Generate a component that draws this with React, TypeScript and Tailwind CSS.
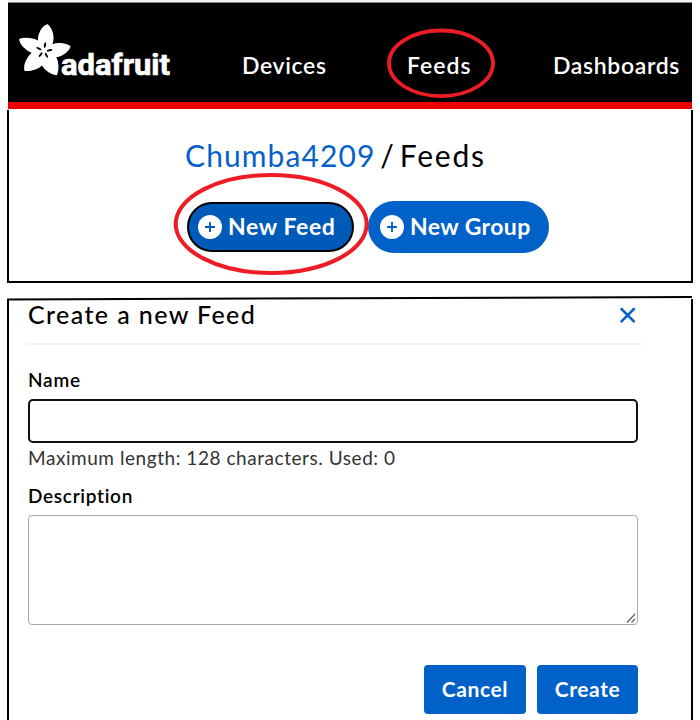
import React from "react";

function AdafruitLogo() {
  return (
    <svg className="block h-[60px] w-[154px]" viewBox="18 22 154 60" fill="none">
      <path
        d="M47.3 24.8C50.5 26.5 53 33 53 38C53 40.5 52.3 43 51.4 45C57 42.6 65.5 43.2 70 46.4C69 50.5 63 55.2 57.5 56.4L55.4 56.6C58.2 61.5 58.8 69 56.6 74.6C51.5 74.8 45 69.5 42 64.6C38.5 68.5 31 71.3 25 70.3C23.8 65 27 57 32.6 52.6C26 50 20.2 44 19.8 39.4C25 37.6 34 38.4 38.6 41.4C37.9 34.5 42 26.5 47.3 24.8Z"
        fill="#fff"
        stroke="#fff"
        strokeWidth="1.2"
        strokeLinejoin="round"
      />
      <g fill="#000">
        <ellipse cx="45" cy="45.1" rx="1.1" ry="2.9" transform="rotate(9 45 45.1)" />
        <ellipse cx="49.5" cy="50.3" rx="2.9" ry="1" transform="rotate(-12 49.5 50.3)" />
        <ellipse cx="46.4" cy="55.2" rx="1" ry="2.8" transform="rotate(-28 46.4 55.2)" />
        <ellipse cx="40.6" cy="54.7" rx="1" ry="2.8" transform="rotate(37 40.6 54.7)" />
        <ellipse cx="38.9" cy="48.6" rx="2.9" ry="1" transform="rotate(28 38.9 48.6)" />
      </g>
      <text x="61" y="75" fill="#fff" stroke="#fff" strokeWidth="0.7" fontFamily="Roboto, sans-serif" fontWeight="700" fontSize="30" textLength="109" lengthAdjust="spacingAndGlyphs">adafruit</text>
    </svg>
  );
}

function PlusBadge({ color }: { color: string }) {
  return (
    <svg className="block size-6 shrink-0" viewBox="0 0 24 24">
      <circle cx="12" cy="12" r="12" fill="#fff" />
      <path d="M12 7v10M7 12h10" stroke={color} strokeWidth="1.9" />
    </svg>
  );
}

export default function App() {
  return (
    <div className="relative h-[720px] w-[700px] overflow-hidden bg-white font-['Lato',sans-serif] whitespace-nowrap text-black">
      <div className="ml-2 h-[3px] w-[684px] border-b border-[#858585] bg-[#eef2f6]" />
      <header className="ml-2 flex h-[106px] w-[684px] border-b-[7px] border-[#e90000] bg-black pt-[19px] pl-[10px] text-[23px] font-semibold text-white">
        <AdafruitLogo />
        <nav className="flex pt-[30px] leading-[26px] tracking-[0.65px]">
          <a className="ml-[70px] w-[165px]">Devices</a>
          <a className="w-[145px] tracking-[1px]">Feeds</a>
          <a className="ml-px">Dashboards</a>
        </nav>
      </header>

      <section className="mt-px ml-[7px] h-[173px] w-[686px] border-2 border-t-0 border-black pt-[27px] pl-[176px]">
        <h1 className="text-[30px] leading-[36px] tracking-[1.1px] [word-spacing:-4px]">
          <a className="text-[#0561c8]">Chumba4209</a> / <span className="tracking-[1.8px]">Feeds</span>
        </h1>
        <div className="mt-[28px] flex items-center text-[23px] font-bold text-white">
          <button className="ml-[2px] flex h-[50px] w-[167px] items-center rounded-full border-2 border-black bg-[#005ab8] pl-[9px]">
            <PlusBadge color="#005ab8" />
            <span className="-mt-[2px] ml-[6px] tracking-[0.6px]">New Feed</span>
          </button>
          <button className="ml-[14px] flex h-[52px] w-[181px] items-center rounded-full bg-[#0061c9] pl-[12px]">
            <PlusBadge color="#0061c9" />
            <span className="-mt-[2px] ml-[6px] tracking-[0.4px]">New Group</span>
          </button>
        </div>
      </section>

      <section className="mt-4 ml-[7px] h-[421px] w-[686px] border-x-2 border-black pl-[19px]">
        <div className="flex h-[46px] w-[613px] items-start border-b-2 border-[#f1f1f1]">
          <h2 className="text-[25px] leading-[30px] font-medium tracking-[1.4px]">Create a new Feed</h2>
          <svg className="mt-[8px] mr-[5px] ml-auto block size-4" viewBox="0 0 16 16">
            <path d="M1.5 2l12.4 12.4M13.9 2L1.5 14.4" stroke="#0561c8" strokeWidth="2.5" strokeLinecap="round" />
          </svg>
        </div>
        <label className="mt-[23px] block text-[19px] leading-[24px] font-semibold tracking-[0.8px]">Name</label>
        <div className="mt-[7px] h-[44px] w-[610px] rounded-[5px] border-2 border-[#111]" />
        <p className="mt-[3px] text-[19px] leading-[24px] tracking-[0.55px] text-[#333]">Maximum length: 128 characters. Used: 0</p>
        <label className="mt-[14px] block text-[19px] leading-[24px] font-semibold tracking-[0.7px]">Description</label>
        <div className="mt-[7px] flex h-[110px] w-[610px] items-end justify-end rounded-[4px] border border-[#aaa] p-px">
          <svg className="block size-[10px]" viewBox="0 0 10 10">
            <path d="M1 9.5L9 1M5.5 9.5L9 6" stroke="#555" strokeWidth="1.1" />
          </svg>
        </div>
        <div className="mt-[40px] flex w-[610px] justify-end gap-[11px] text-[21px] font-bold tracking-[0.6px] text-white">
          <button className="h-[49px] w-[102px] rounded-[4px] bg-[#0061c9] pb-[2px]">Cancel</button>
          <button className="h-[49px] w-[101px] rounded-[4px] bg-[#0061c9] pb-[2px]">Create</button>
        </div>
      </section>

      <svg className="pointer-events-none absolute inset-0 size-full" viewBox="0 0 700 720" fill="none">
        <ellipse cx="441" cy="63.3" rx="52" ry="32.8" stroke="#ee1c25" strokeWidth="3.8" />
        <ellipse cx="271.2" cy="224" rx="95.5" ry="49" stroke="#ee1c25" strokeWidth="4" />
        <path d="M7 299.5L692 297" stroke="#000" strokeWidth="2" />
      </svg>
    </div>
  );
}
